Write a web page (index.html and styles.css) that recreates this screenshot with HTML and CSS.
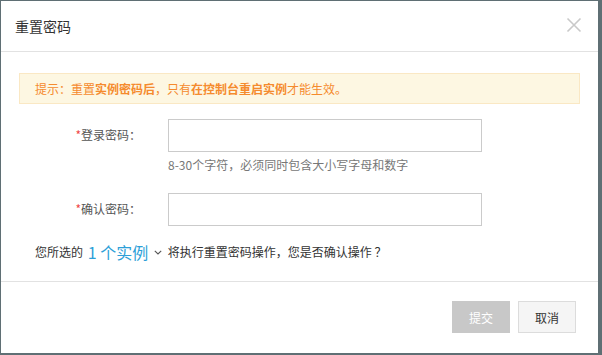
FILE: index.html
```html
<!DOCTYPE html>
<html lang="zh-CN">
<head>
<meta charset="utf-8">
<title>重置密码</title>
<link rel="stylesheet" href="styles.css">
</head>
<body>
<div class="dialog">
  <div class="dialog-header">
    <h3 class="dialog-title">重置密码</h3>
    <button class="close" type="button" aria-label="关闭">
      <svg width="16" height="16" viewBox="0 0 16 16"><path d="M1.5 1.5L14.5 14.5M14.5 1.5L1.5 14.5" stroke="#c9c9c9" stroke-width="1.6" fill="none"/></svg>
    </button>
  </div>
  <div class="dialog-body">
    <div class="alert">提示：重置<b>实例密码后</b>，只有<b>在控制台重启实例</b>才能生效。</div>
    <div class="form-row">
      <label class="form-label"><span class="req">*</span>登录密码：</label>
      <div class="form-field">
        <input class="input" type="password">
        <div class="hint">8-30个字符，必须同时包含大小写字母和数字</div>
      </div>
    </div>
    <div class="form-row row2">
      <label class="form-label"><span class="req">*</span>确认密码：</label>
      <div class="form-field">
        <input class="input" type="password">
      </div>
    </div>
    <p class="confirm">您所选的 <span class="count">1 个实例</span><svg class="chev" width="8" height="5" viewBox="0 0 8 5"><path d="M0.8 0.8L4 4L7.2 0.8" stroke="#555" stroke-width="1.1" fill="none"/></svg> 将执行重置密码操作，您是否确认操作 ？</p>
  </div>
  <div class="dialog-footer">
    <button class="btn btn-primary" type="button" disabled>提交</button>
    <button class="btn btn-default" type="button">取消</button>
  </div>
</div>
</body>
</html>
```

FILE: styles.css
```css
* { box-sizing: border-box; }
html, body { margin: 0; padding: 0; }
body {
  background: #5f6f74;
  font-family: "Noto Sans CJK SC", "Noto Sans", sans-serif;
  font-size: 12px;
  color: #333;
  height: 355px;
  overflow: hidden;
  padding: 1px 4px 2px 1px;
}
.dialog {
  background: #fff;
  height: 352px;
  display: flex;
  flex-direction: column;
}
.dialog-header {
  height: 51px;
  border-bottom: 1px solid #e2e2e2;
  display: flex;
  align-items: center;
  justify-content: space-between;
  padding: 0 16px 0 14px;
}
.dialog-title {
  margin: 0 0 1px 0;
  font-size: 14px;
  font-weight: normal;
  color: #333;
  line-height: 20px;
}
.close {
  border: 0;
  background: none;
  padding: 0;
  width: 16px;
  height: 16px;
  display: flex;
  margin-top: -2px;
}
.dialog-body {
  flex: 1;
  padding: 21px 18px 0 18px;
}
.alert {
  height: 31px;
  background: #fdf7e2;
  border: 1px solid #fae8c4;
  color: #f58b2e;
  line-height: 29px;
  padding-left: 15px;
}
.alert b { font-weight: 600; }
.form-row {
  display: flex;
  margin-top: 15px;
}
.form-row.row2 { margin-top: 20px; }
.form-label {
  width: 122px;
  text-align: right;
  color: #555;
  line-height: 32px;
  height: 32px;
  flex: none;
}
.req { color: #f04848; }
.form-field {
  margin-left: 27px;
  display: flex;
  flex-direction: column;
}
.input {
  width: 314px;
  height: 33px;
  border: 1px solid #cbcbcb;
  margin: 0;
  padding: 0 8px;
  outline: none;
}
.hint {
  color: #777;
  margin-top: 5px;
  line-height: 16px;
}
.confirm {
  margin: 15px 0 0 16px;
  line-height: 22px;
  color: #333;
  display: flex;
  align-items: center;
  white-space: pre;
}
.count {
  color: #2d9fd8;
  font-size: 16px;
  margin-left: 2px;
}
.chev { margin: 1px 3px 0 6px; }
.dialog-footer {
  border-top: 1px solid #e2e2e2;
  height: 72px;
  display: flex;
  justify-content: flex-end;
  gap: 8px;
  padding: 19px 22px 0 0;
}
.btn {
  width: 58px;
  height: 32px;
  font-family: inherit;
  font-size: 12px;
  margin: 0;
}
.btn-primary {
  background: #c8c8c8;
  color: #fff;
  border: 0;
}
.btn-default {
  background: #f5f5f5;
  border: 1px solid #dcdcdc;
  color: #333;
}
```
